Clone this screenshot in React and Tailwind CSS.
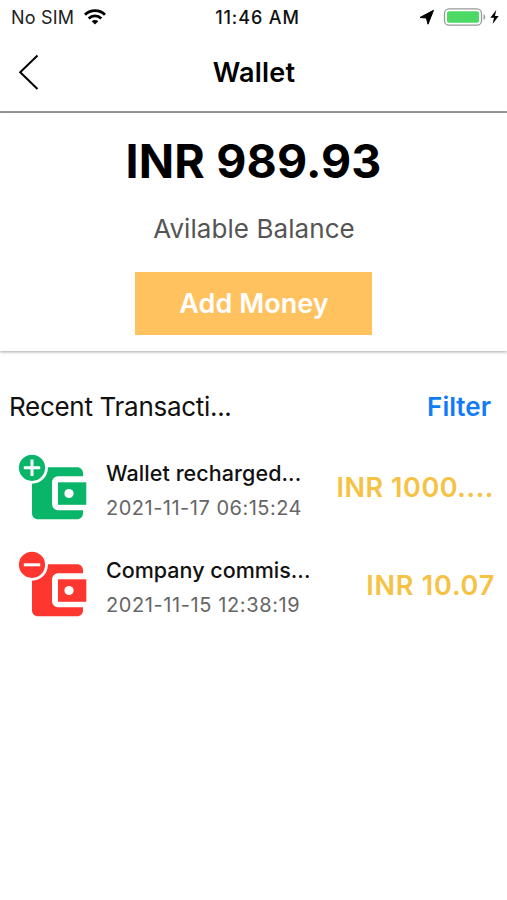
const WALLET_BODY =
  "M38 467H77C80.5 467 83 469.5 83 473V476H59C54.5 476 52 478.5 52 483V503C52 507.5 54.5 510 59 510H83V513C83 516.5 80.5 519 77 519H38C34.5 519 32 516.5 32 513V473C32 469.5 34.5 467 38 467Z";

function StatusBar() {
  return (
    <div className="flex h-[34px] shrink-0 items-center justify-between pl-[11px] pr-[7px] text-[18px] leading-[34px]">
      <div className="flex w-[160px] items-center">
        <span className="w-[73px] whitespace-nowrap pt-px text-[18px] tracking-[0.2px] text-[#222]">No SIM</span>
        <svg width="22" height="16" viewBox="0 0 22 16" className="block" fill="none" stroke="#000" strokeWidth="2.9">
          <path d="M1 5.7C6.6 0.3 15.4 0.3 21 5.7" />
          <path d="M4.7 9.5C8.3 6 13.7 6 17.3 9.5" />
          <path d="M11 15.6 7.7 12.3C9.5 10.6 12.5 10.6 14.3 12.3Z" fill="#000" stroke="none" />
        </svg>
      </div>
      <span className="ml-[4px] w-[90px] whitespace-nowrap pt-px text-center text-[18px] font-medium tracking-[0.9px] text-[#111]">11:46 AM</span>
      <div className="flex w-[160px] items-center justify-end">
        <svg width="80" height="20" viewBox="420 7 80 20" className="block">
          <path d="M420 17.5 433.5 10.3 428 24.2 426.4 18Z" fill="#000" stroke="#000" strokeWidth="1" strokeLinejoin="round" />
          <rect x="444.5" y="8.8" width="37" height="16.4" rx="4.5" fill="#fff" stroke="#999" strokeWidth="1.3" />
          <rect x="447" y="11.2" width="32" height="11.6" rx="2" fill="#4cd964" />
          <path d="M483.5 14.2C485.8 15 485.8 19 483.5 19.8Z" fill="#999" />
          <path d="M496.3 10 490.3 17.7H494L492.6 24 498.7 15.9H494.9Z" fill="#000" />
        </svg>
      </div>
    </div>
  );
}

function WalletIcon({ color, plus }) {
  return (
    <svg width="72" height="70" viewBox="17 451.7 72 70" className="block shrink-0">
      <path d={WALLET_BODY} fill={color} />
      <path d="M58 482H86.3V504.5H58Z" fill={color} />
      <circle cx="69" cy="493.2" r="4.6" fill="#fff" />
      <circle cx="32" cy="467.5" r="14.5" fill={color} stroke="#fff" strokeWidth="2.8" />
      <path d={plus ? "M23.8 467.5H40.2M32 459.3V475.7" : "M23.8 467.5H40.2"} stroke="#fff" strokeWidth="3" />
    </svg>
  );
}

function Transaction({ title, titleClass, date, dateClass, amount, amountClass, color, plus }) {
  return (
    <div className="flex h-[97px] items-start pl-[17px] pr-[13px]">
      <WalletIcon color={color} plus={plus} />
      <div className="ml-[17px] flex w-[210px] flex-col whitespace-nowrap pt-[6px]">
        <span className={`h-[30px] text-[21.5px] font-medium leading-[30px] text-[#111] ${titleClass}`}>{title}</span>
        <span className={`mt-[6px] h-[29px] text-[20px] leading-[29px] text-[#666] ${dateClass}`}>{date}</span>
      </div>
      <span className={`ml-auto mt-[17px] whitespace-nowrap text-[27px] font-semibold leading-[37px] text-[#f6c244] ${amountClass}`}>
        {amount}
      </span>
    </div>
  );
}

export default function App() {
  return (
    <div className="flex h-[900px] w-[507px] flex-col overflow-hidden bg-white font-['Inter','Liberation_Sans',sans-serif]">
      <StatusBar />
      <header className="grid h-[79px] shrink-0 grid-cols-3 items-center border-b-2 border-[#999]">
        <svg width="24" height="38" viewBox="17 53 24 38" className="-mt-[2px] ml-[17px] block" fill="none" stroke="#000" strokeWidth="2">
          <path d="M37.5 55.5 20.2 72.3 37.5 89" />
        </svg>
        <h1 className="pl-px text-center text-[27px] font-semibold leading-[36px] tracking-[0.2px] text-black">Wallet</h1>
      </header>
      <section className="flex h-[238px] shrink-0 flex-col items-center bg-white shadow-[0_1px_3px_rgba(0,0,0,0.35)]">
        <p className="mt-[18px] h-[60px] whitespace-nowrap text-[46.5px] font-bold leading-[60px] tracking-[0.15px] text-black">INR 989.93</p>
        <p className="mt-[20px] h-[36px] whitespace-nowrap pl-px text-[26px] leading-[36px] tracking-[0.07px] text-[#555]">Avilable Balance</p>
        <button className="mt-[25px] h-[63px] w-[237px] whitespace-nowrap bg-[#ffc25f] pl-px pt-[2px] text-[27px] font-semibold tracking-[0.07px] text-white">Add Money</button>
      </section>
      <div className="mt-[38px] flex h-[36px] shrink-0 items-center justify-between pl-[9px] pr-[16px] text-[26px] leading-[36px]">
        <h2 className="whitespace-nowrap tracking-[-0.3px] text-[#111]">Recent Transacti...</h2>
        <a className="font-semibold text-[#127bf6]">Filter</a>
      </div>
      <div className="mt-[27px] flex flex-col">
        <Transaction title="Wallet recharged..." titleClass="tracking-[0.07px]" date="2021-11-17 06:15:24" dateClass="tracking-[0.5px]" amount="INR 1000...." amountClass="tracking-[0.55px]" color="#09b568" plus />
        <Transaction title="Company commis..." titleClass="" date="2021-11-15 12:38:19" dateClass="tracking-[0.6px]" amount="INR 10.07" amountClass="-mr-[1px] pt-px tracking-[0.8px]" color="#fd372f" />
      </div>
    </div>
  );
}
